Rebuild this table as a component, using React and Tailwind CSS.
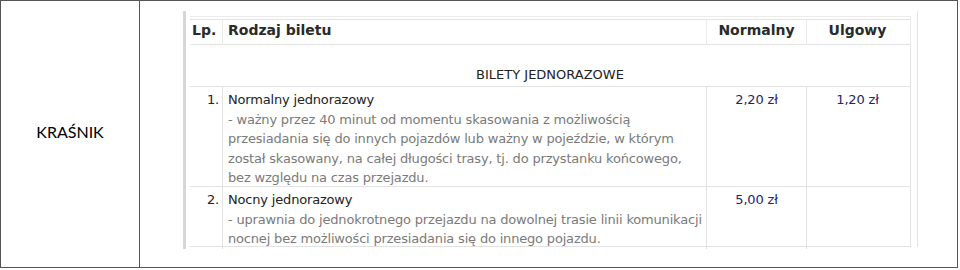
const ROWS = [
  {
    lp: "1.",
    title: "Normalny jednorazowy",
    lines: [
      "- ważny przez 40 minut od momentu skasowania z możliwością",
      "przesiadania się do innych pojazdów lub ważny w pojeździe, w którym",
      "został skasowany, na całej długości trasy, tj. do przystanku końcowego,",
      "bez względu na czas przejazdu.",
    ],
    normal: "2,20 zł",
    reduced: "1,20 zł",
    h: "h-[100px]",
  },
  {
    lp: "2.",
    title: "Nocny jednorazowy",
    lines: [
      "- uprawnia do jednokrotnego przejazdu na dowolnej trasie linii komunikacji",
      "nocnej bez możliwości przesiadania się do innego pojazdu.",
    ],
    normal: "5,00 zł",
    reduced: "",
    h: "h-[60px]",
  },
];

const COLS = "grid grid-cols-[33px_484px_100px_101px]";

export default function App() {
  return (
    <div className="w-[958px] h-[268px] flex border border-[#555] bg-white">
      {/* City cell */}
      <div className="w-[139px] shrink-0 border-r border-[#555] flex items-center justify-center">
        <span className="text-[16px] text-black font-['Lato',sans-serif] pb-[5px]">KRAŚNIK</span>
      </div>

      {/* Screenshot of the price table */}
      <div className="flex-1 pl-[43px] pt-[10px]">
        <div className="w-[735px] h-[238px] flex border-l-[3px] border-[#d6d6d6]">
          <div className="w-[725px] pl-[4px] pt-[5px] font-['DejaVu_Sans',sans-serif] text-[13px] tracking-[-0.18px] text-[#333]">
            {/* header */}
            <div className="border-t border-r border-[#ececec] pt-[2px]">
              <div className={`${COLS} h-[26px] border-t border-b border-[#e2e2e2] font-bold text-[14px] tracking-normal text-[#2a2a2a]`}>
                <div className="border-r border-[#ececec] flex items-end pb-[4px] pl-[2px]">Lp.</div>
                <div className="border-r border-[#ececec] flex items-end pb-[4px] pl-[5px]">Rodzaj biletu</div>
                <div className="border-r border-[#ececec] flex items-end justify-center pb-[4px]">Normalny</div>
                <div className="flex items-end justify-center pb-[4px]">Ulgowy</div>
              </div>
            </div>

            {/* section title */}
            <div className="h-[42px] border-b border-r border-[#e2e2e2] flex items-end justify-center pb-[2px] tracking-normal text-[#222]">
              BILETY JEDNORAZOWE
            </div>

            {ROWS.map((r) => (
              <div key={r.lp} className={`${COLS} ${r.h} border-b border-r border-[#e2e2e2] leading-[19.5px]`}>
                <div className="border-r border-[#e2e2e2] text-right pr-[3px] pt-[3px] text-[#222]">{r.lp}</div>
                <div className="border-r border-[#e2e2e2] pl-[5px] pt-[3px] whitespace-nowrap">
                  <div className="text-[#222]">{r.title}</div>
                  {r.lines.map((l) => (
                    <div key={l} className="text-[#7a7a7a]">{l}</div>
                  ))}
                </div>
                <div className="border-r border-[#e2e2e2] text-center pt-[3px] text-[#24246e]">{r.normal}</div>
                <div className="text-center pt-[3px] text-[#24246e]">{r.reduced}</div>
              </div>
            ))}
          </div>
          <div className="w-[6px]" />
          <div className="w-px h-[236px] bg-[#e4e4e4]" />
        </div>
      </div>
    </div>
  );
}
